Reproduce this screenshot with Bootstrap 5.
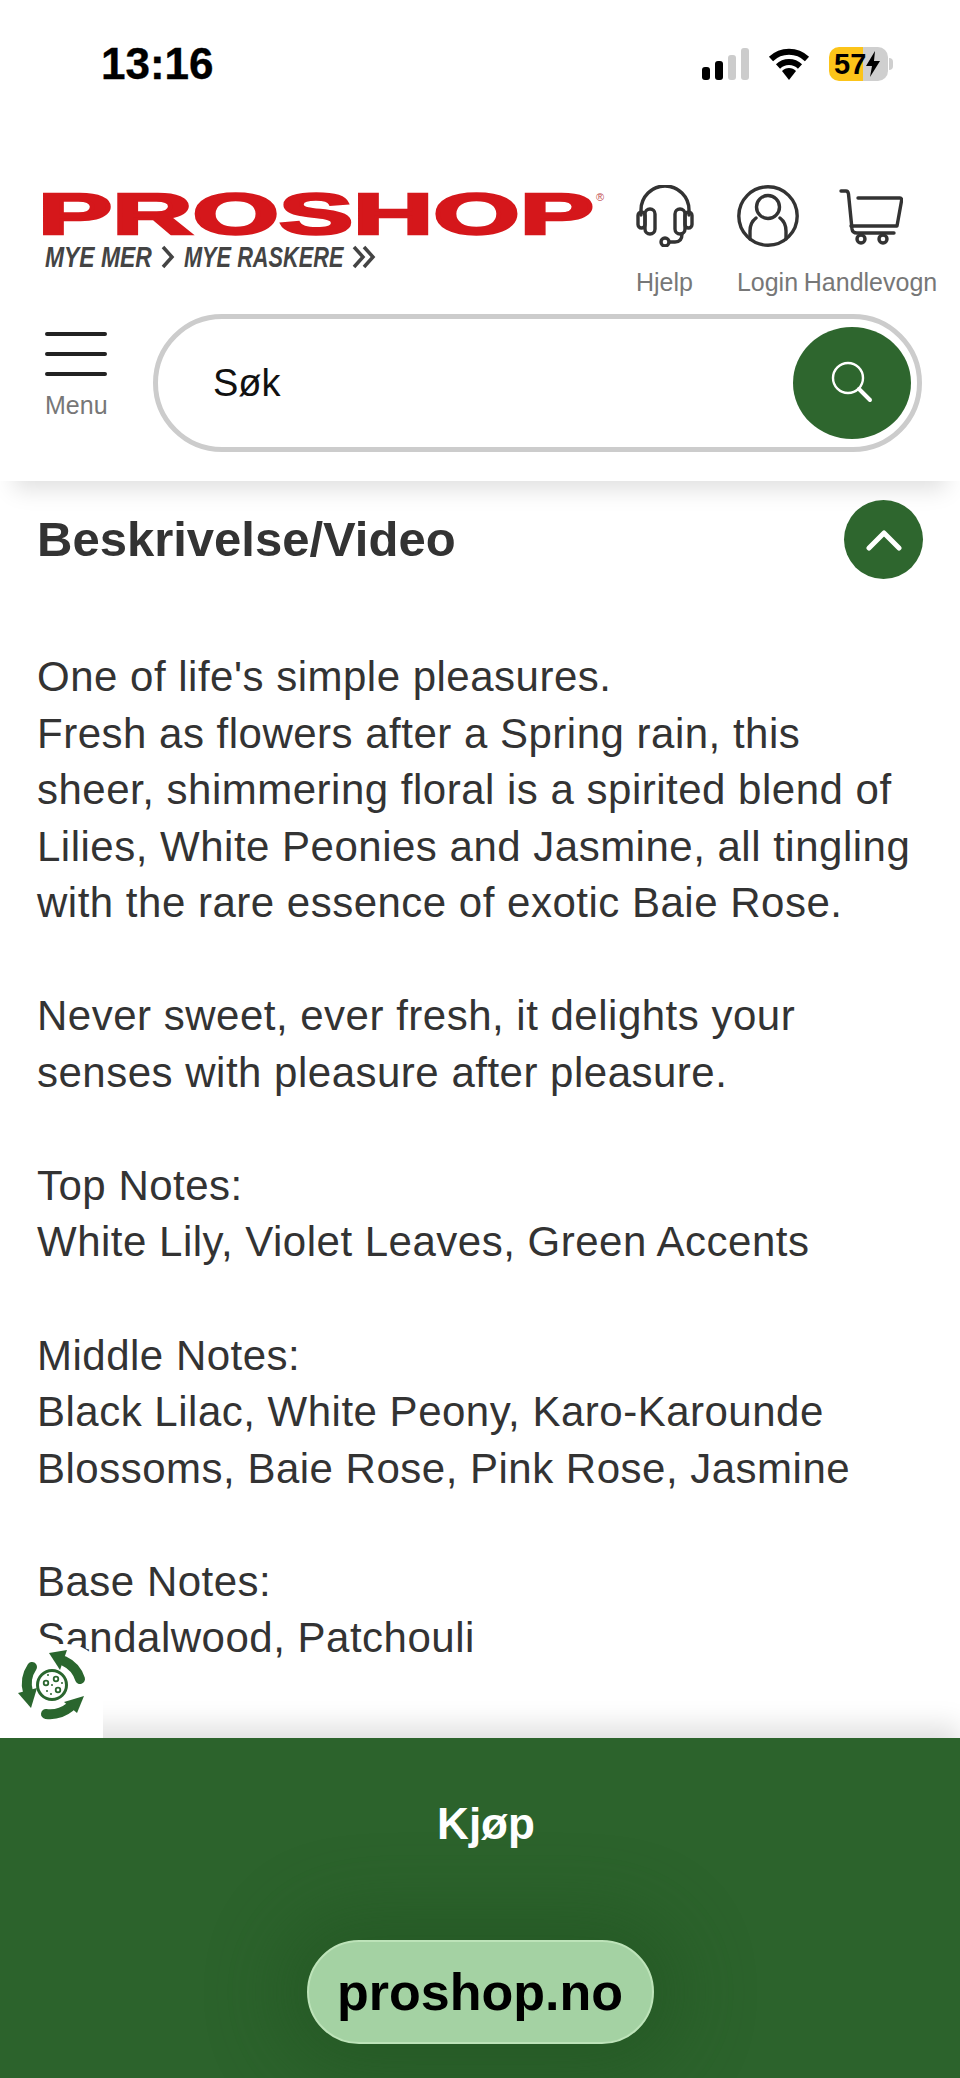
<!DOCTYPE html>
<html lang="no">
<head>
  <meta charset="UTF-8" />
  <meta name="viewport" content="width=device-width, initial-scale=1.0"/>
  <title>Proshop</title>
  <link href="https://cdn.jsdelivr.net/npm/bootstrap@5.3.0/dist/css/bootstrap.min.css" rel="stylesheet" />
  <style>
    html, body {
      height: 100%;
    }

    body {
      font-family: "Liberation Sans", Arial, sans-serif;
      color: #333;
      background-color: #fff;
      overflow: hidden;
    }

    .page-wrap {
      height: 2078px;
    }

    /* status bar */
    .status-row {
      height: 128px;
      margin-bottom: 42px;
      padding: 0 72px 0 101px;
    }

    .status-time {
      font-size: 44px;
      line-height: 1;
      font-weight: 700;
      color: #000;
      -webkit-text-stroke: 0.4px #000;
    }

    .wifi-icon {
      margin-left: 18px;
    }

    .battery-box {
      width: 59px;
      height: 34px;
      margin-left: 19px;
      border-radius: 10px;
      background: linear-gradient(90deg, #fcc419 58%, #cfcfcf 58%);
      font-size: 29px;
      line-height: 34px;
      font-weight: 700;
      color: #000;
      padding-left: 5px;
      position: relative;
    }

    .battery-box::after {
      content: "";
      position: absolute;
      right: -5px;
      top: 11px;
      width: 4px;
      height: 12px;
      border-radius: 0 4px 4px 0;
      background-color: #cfcfcf;
    }

    /* header */
    .site-header {
      position: relative;
      z-index: 2;
      background-color: #fff;
      box-shadow: 0 22px 22px -14px rgba(0, 0, 0, 0.13);
    }

    .header-top {
      padding: 15px 38px 0 43px;
    }

    .logo-svg {
      width: 570px;
      height: 85px;
      flex-shrink: 0;
      overflow: visible;
    }

    .tool-col {
      width: 103px;
      white-space: nowrap;
    }

    .tool-label {
      font-size: 25px;
      line-height: 29px;
      color: #777;
      margin-top: 21px;
    }

    .header-bottom {
      padding: 17px 38px 29px 45px;
      gap: 46px;
    }

    .menu-col {
      width: 62px;
      padding-top: 18px;
    }

    .menu-col .tool-label {
      margin-top: 13px;
    }

    .search-pill {
      height: 138px;
      border: 5px solid #ccc;
      border-radius: 69px;
      padding: 0 6px 0 55px;
    }

    .search-text {
      font-size: 38px;
      color: #111;
    }

    .search-btn {
      width: 118px;
      height: 112px;
      background-color: #2e662e;
    }

    /* content */
    .main-area {
      position: relative;
      z-index: 3;
      padding: 19px 37px 0;
      overflow: hidden;
      min-height: 0;
    }

    .section-title {
      font-size: 49px;
      font-weight: 700;
      color: #333;
      margin: 0;
    }

    .collapse-btn {
      width: 79px;
      height: 79px;
      background-color: #2e662e;
    }

    .desc-text {
      margin-top: 70px;
      font-size: 42px;
      letter-spacing: 0.5px;
      line-height: 56.55px;
      color: #333;
    }

    .desc-text p {
      margin-bottom: 56.55px;
    }

    .recycle-widget {
      position: absolute;
      left: 0;
      bottom: 0;
      width: 103px;
      height: 94px;
      background-color: #fff;
      border-top-right-radius: 36px;
    }

    /* footer */
    .buy-bar {
      position: relative;
      z-index: 2;
      height: 340px;
      flex-shrink: 0;
      background-color: #2c632c;
      box-shadow: 0 -12px 26px rgba(0, 0, 0, 0.13);
    }

    .buy-label {
      font-size: 44px;
      line-height: 53px;
      font-weight: 700;
      color: #fff;
      margin: 59px 0 90px 12px;
    }

    .url-pill {
      width: 347px;
      height: 104px;
      border-radius: 52px;
      background-color: #a4d2a3;
      border: 2px solid #bde3b9;
      box-shadow: 0 0 70px 30px rgba(30, 80, 30, 0.45);
      font-size: 52px;
      font-weight: 700;
      color: #000;
    }
  </style>
</head>
<body>
  <div class="page-wrap d-flex flex-column">
    <div class="status-row d-flex align-items-center justify-content-between flex-shrink-0">
      <div class="status-time">13:16</div>
      <div class="d-flex align-items-center">
        <svg width="48" height="32" viewBox="0 0 48 32">
          <rect x="0" y="19" width="8" height="13" rx="3" fill="#000"/>
          <rect x="13" y="13" width="8" height="19" rx="3" fill="#000"/>
          <rect x="26" y="7" width="8" height="25" rx="3" fill="#ccc"/>
          <rect x="39" y="0" width="8" height="32" rx="3" fill="#ccc"/>
        </svg>
        <svg class="wifi-icon" width="42" height="32" viewBox="0 0 42 32" fill="none" stroke="#000" stroke-width="6">
          <path d="M3 11 A26 26 0 0 1 39 11"/>
          <path d="M10 18.5 A16 16 0 0 1 32 18.5"/>
          <path d="M14 23 A9.5 9.5 0 0 1 28 23 L21 32 Z" fill="#000" stroke="none"/>
        </svg>
        <div class="battery-box d-flex align-items-center">
          <span>57</span>
          <svg width="14" height="26" viewBox="0 0 14 26"><path d="M9 0 L0 15 H6 L4 26 L14 10 H8 Z" fill="#000"/></svg>
        </div>
      </div>
    </div>

    <header class="site-header flex-shrink-0">
      <div class="header-top d-flex">
        <svg class="logo-svg" viewBox="43 185 570 85">
          <text transform="translate(38 234) scale(1.917 1)" font-family="Liberation Sans" font-weight="700" font-size="58" fill="#d5171b" stroke="#d5171b" stroke-width="2.500">PROSHOP</text>
          <text x="596" y="201" font-family="Liberation Sans" font-size="11" fill="#c0494b">®</text>
          <text transform="translate(45 267) scale(0.79 1)" font-family="Liberation Sans" font-weight="700" font-style="italic" font-size="29" fill="#444">MYE MER</text>
          <path d="M163 247 L172 257 L163 267" fill="none" stroke="#444" stroke-width="3.5"/>
          <text transform="translate(184 267) scale(0.75 1)" font-family="Liberation Sans" font-weight="700" font-style="italic" font-size="29" fill="#444">MYE RASKERE</text>
          <path d="M354 247 L363 257 L354 267 M364 247 L373 257 L364 267" fill="none" stroke="#444" stroke-width="3.5"/>
        </svg>
        <div class="tool-col d-flex flex-column align-items-center">
          <svg width="58" height="62" viewBox="0 0 58 62" fill="none" stroke="#333" stroke-width="3.4" stroke-linecap="round" stroke-linejoin="round">
            <path d="M5 30 V25 A24 24 0 0 1 53 25 V30"/>
            <rect x="2" y="27" width="7" height="16" rx="3.5"/>
            <rect x="9" y="24" width="10" height="25" rx="5"/>
            <rect x="49" y="27" width="7" height="16" rx="3.5"/>
            <rect x="39" y="24" width="10" height="25" rx="5"/>
            <path d="M46 49 C46 55 43 57 39 57 H34"/>
            <circle cx="29" cy="57" r="4"/>
          </svg>
          <div class="tool-label">Hjelp</div>
        </div>
        <div class="tool-col d-flex flex-column align-items-center">
          <svg width="62" height="62" viewBox="0 0 62 62" fill="none" stroke="#333" stroke-width="3.4" stroke-linecap="round">
            <circle cx="31" cy="31" r="29.2"/>
            <circle cx="31" cy="22" r="11.500"/>
            <path d="M13 54 V46 C13 40 15 36 19 33 M49 54 V46 C49 40 47 36 43 33"/>
          </svg>
          <div class="tool-label">Login</div>
        </div>
        <div class="tool-col d-flex flex-column align-items-center">
          <svg width="64" height="62" viewBox="0 0 64 62" fill="none" stroke="#333" stroke-width="3.4" stroke-linecap="round" stroke-linejoin="round">
            <path d="M2 6 H7 Q9 6 9.500 9 L13 44 Q13.500 48 18 48 H55"/>
            <path d="M19 13 H61 Q63 13 62.500 16 L58 41 H12"/>
            <circle cx="22" cy="54" r="4"/>
            <circle cx="44" cy="54" r="4"/>
          </svg>
          <div class="tool-label">Handlevogn</div>
        </div>
      </div>

      <div class="header-bottom d-flex">
        <div class="menu-col flex-shrink-0 text-center">
          <svg class="d-block" width="62" height="46" viewBox="0 0 62 46" stroke="#222" stroke-width="4" stroke-linecap="round">
            <path d="M2 2 H60 M2 22 H60 M2 42 H60"/>
          </svg>
          <div class="tool-label">Menu</div>
        </div>
        <div class="search-pill flex-grow-1 d-flex align-items-center justify-content-between">
          <span class="search-text">Søk</span>
          <div class="search-btn rounded-circle d-flex align-items-center justify-content-center">
            <svg width="44" height="44" viewBox="0 0 44 44" fill="none" stroke="#fff" stroke-linecap="round">
              <circle cx="18" cy="17" r="15" stroke-width="2.4"/>
              <path d="M29 28 L40 39" stroke-width="4"/>
            </svg>
          </div>
        </div>
      </div>
    </header>

    <main class="main-area flex-grow-1">
      <div class="d-flex align-items-center justify-content-between">
        <h2 class="section-title">Beskrivelse/Video</h2>
        <div class="collapse-btn rounded-circle d-flex align-items-center justify-content-center">
          <svg width="36" height="22" viewBox="0 0 36 22" fill="none" stroke="#fff" stroke-width="5" stroke-linecap="round" stroke-linejoin="round">
            <path d="M3 19 L18 4 L33 19"/>
          </svg>
        </div>
      </div>
      <div class="desc-text">
        <p>One of life's simple pleasures.<br>Fresh as flowers after a Spring rain, this sheer, shimmering floral is a spirited blend of Lilies, White Peonies and Jasmine, all tingling with the rare essence of exotic Baie Rose.</p>
        <p>Never sweet, ever fresh, it delights your senses with pleasure after pleasure.</p>
        <p>Top Notes:<br>White Lily, Violet Leaves, Green Accents</p>
        <p>Middle Notes:<br>Black Lilac, White Peony, Karo-Karounde Blossoms, Baie Rose, Pink Rose, Jasmine</p>
        <p>Base Notes:<br>Sandalwood, Patchouli</p>
      </div>
      <div class="recycle-widget">
        <svg class="d-block" width="103" height="94" viewBox="0 1644 103 94" fill="none">
          <g stroke="#2a662e" stroke-width="10" stroke-linecap="round">
            <path d="M80 1679 A30 30 0 0 0 64 1661"/>
            <path d="M32 1667 A30 30 0 0 0 28 1692"/>
            <path d="M46 1714 A32 32 0 0 0 70 1707"/>
          </g>
          <g fill="#2a662e">
            <path d="M49 1653 L67 1650 L60 1670 Z"/>
            <path d="M18 1693 L37 1688 L31 1708 Z"/>
            <path d="M64 1702 L84 1696 L77 1713 Z"/>
          </g>
          <circle cx="52" cy="1685" r="14.500" stroke="#2a662e" stroke-width="3"/>
          <g stroke="#2a662e" stroke-width="1.800">
            <circle cx="46" cy="1683" r="2.300"/>
            <circle cx="56" cy="1679" r="2.300"/>
            <circle cx="58" cy="1690" r="2.300"/>
          </g>
          <g fill="#2a662e">
            <circle cx="48" cy="1675" r="1"/>
            <circle cx="62" cy="1683" r="1"/>
            <circle cx="52" cy="1685" r="1"/>
            <circle cx="47" cy="1691" r="1"/>
            <circle cx="51" cy="1694" r="1"/>
          </g>
        </svg>
      </div>
    </main>

    <footer class="buy-bar d-flex flex-column align-items-center">
      <div class="buy-label">Kjøp</div>
      <div class="url-pill d-flex align-items-center justify-content-center">proshop.no</div>
    </footer>
  </div>

  <script src="https://cdn.jsdelivr.net/npm/bootstrap@5.3.0/dist/js/bootstrap.bundle.min.js"></script>
</body>
</html>
